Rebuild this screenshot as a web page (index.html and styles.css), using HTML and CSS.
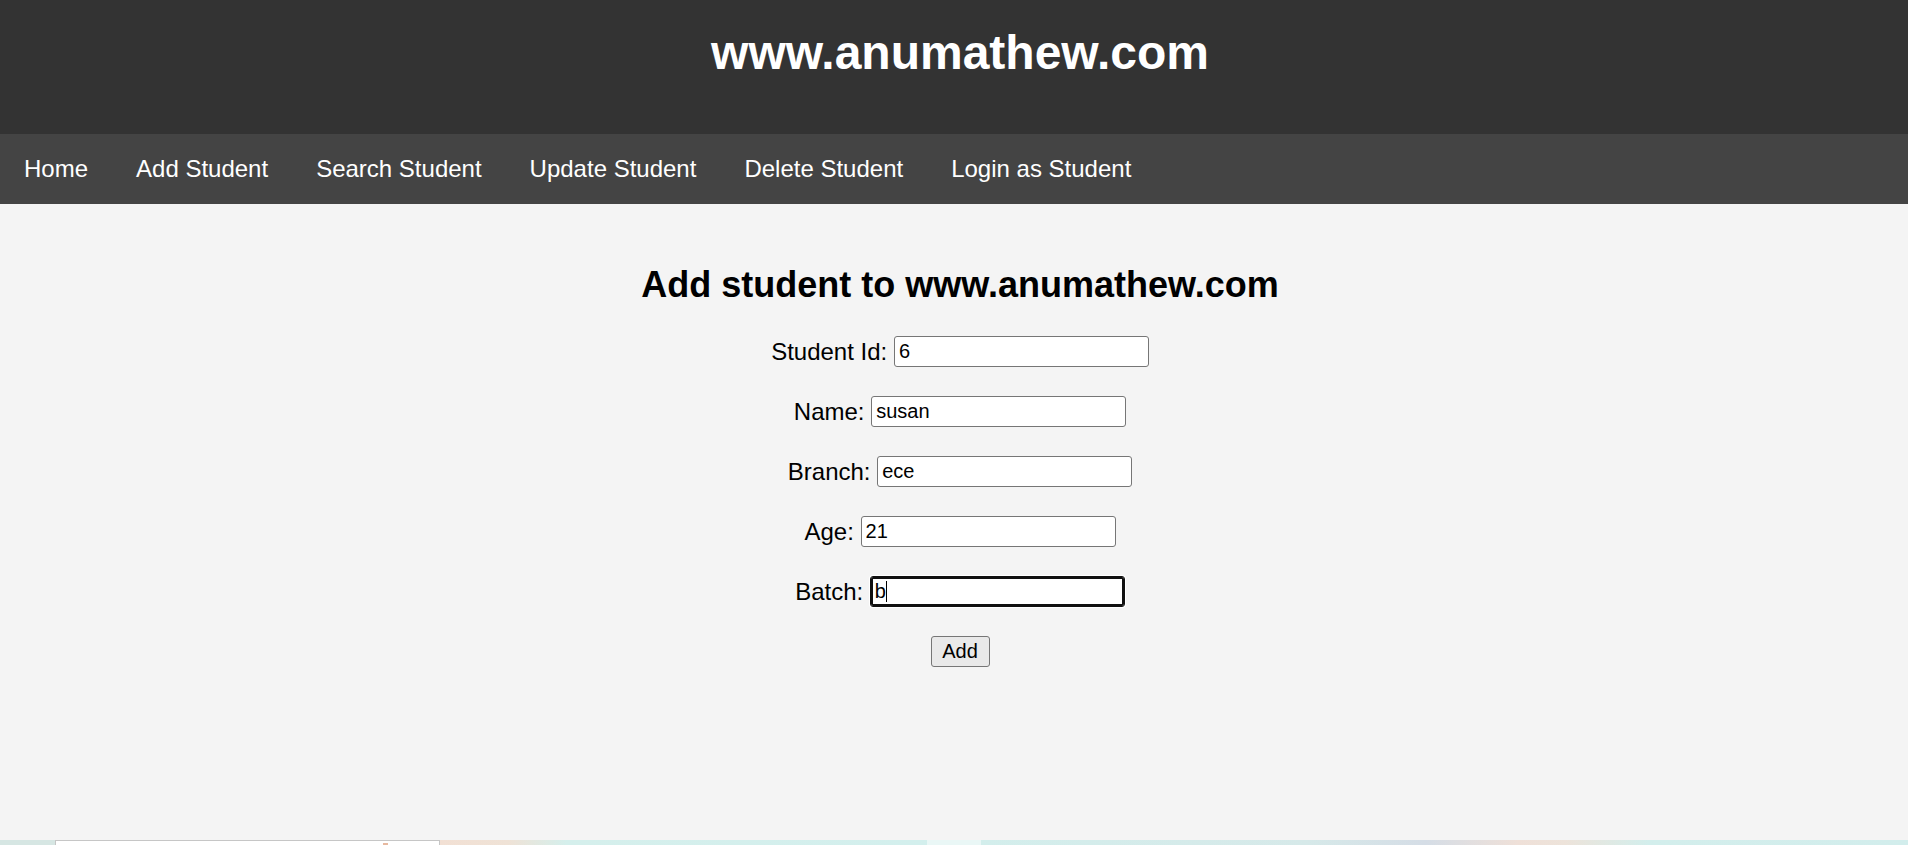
FILE: index.html
```html
<!DOCTYPE html>
<html lang="en">
<head>
<meta charset="utf-8">
<title>Add Student - www.anumathew.com</title>
<link rel="stylesheet" href="styles.css">
</head>
<body>
<header class="site-header">
  <h1 class="site-title">www.anumathew.com</h1>
</header>
<nav class="top-nav">
  <a class="nav-link" href="#">Home</a>
  <a class="nav-link" href="#">Add Student</a>
  <a class="nav-link" href="#">Search Student</a>
  <a class="nav-link" href="#">Update Student</a>
  <a class="nav-link" href="#">Delete Student</a>
  <a class="nav-link" href="#">Login as Student</a>
</nav>
<main class="content">
  <h2 class="page-heading">Add student to www.anumathew.com</h2>
  <form class="student-form">
    <div class="form-row">
      <label class="field-label" for="sid">Student Id:</label>
      <input class="field-input" id="sid" type="text" value="6">
    </div>
    <div class="form-row">
      <label class="field-label" for="sname">Name:</label>
      <input class="field-input" id="sname" type="text" value="susan">
    </div>
    <div class="form-row">
      <label class="field-label" for="sbranch">Branch:</label>
      <input class="field-input" id="sbranch" type="text" value="ece">
    </div>
    <div class="form-row">
      <label class="field-label" for="sage">Age:</label>
      <input class="field-input" id="sage" type="text" value="21">
    </div>
    <div class="form-row">
      <label class="field-label" for="sbatch">Batch:</label>
      <span class="input-wrap">
        <input class="field-input is-focused" id="sbatch" type="text" value="b">
        <span class="caret"></span>
      </span>
    </div>
    <div class="form-row">
      <button class="submit-btn" type="button">Add</button>
    </div>
  </form>
</main>
<div class="taskbar-strip">
  <span class="strip-seg seg-a"></span>
  <span class="strip-seg seg-b"><span class="speck"></span></span>
  <span class="strip-seg seg-c"></span>
  <span class="strip-seg seg-d"></span>
  <span class="strip-seg seg-e"></span>
</div>
</body>
</html>
```
FILE: styles.css
```css
html, body {
  margin: 0;
  padding: 0;
}

body {
  height: 100vh;
  display: flex;
  flex-direction: column;
  font-family: "Liberation Sans", Arial, sans-serif;
  background: #f4f4f4;
  overflow: hidden;
}

.site-header {
  background: #333333;
  height: 134px;
  box-sizing: border-box;
  padding: 25px 0 0 12px;
  flex: none;
}

.site-title {
  margin: 0;
  color: #ffffff;
  font-size: 48px;
  font-weight: bold;
  line-height: normal;
  text-align: center;
}

.top-nav {
  background: #444444;
  display: flex;
  flex: none;
}

.nav-link {
  color: #ffffff;
  text-decoration: none;
  font-size: 24px;
  line-height: 28px;
  padding: 21px 24px;
}

.content {
  flex: 1;
  padding: 30px 0 0 12px;
  background: #f4f4f4;
}

.page-heading {
  margin: 30px 0;
  font-size: 36px;
  font-weight: bold;
  line-height: normal;
  text-align: center;
  color: #000000;
}

.student-form {
  display: flex;
  flex-direction: column;
  gap: 29px;
}

.form-row {
  display: flex;
  justify-content: center;
  align-items: center;
  gap: 6.67px;
  height: 31px;
}

.field-label {
  font-size: 24px;
  line-height: normal;
  color: #000000;
}

.input-wrap {
  position: relative;
  display: inline-flex;
}

.field-input {
  width: 255px;
  height: 31px;
  box-sizing: border-box;
  border: 1px solid #767676;
  border-radius: 3px;
  padding: 0 4px;
  margin: 0;
  background: #ffffff;
  color: #000000;
  font-family: "Liberation Sans", Arial, sans-serif;
  font-size: 20px;
  outline: none;
}

.field-input.is-focused {
  border-color: #101010;
  box-shadow: inset 0 0 0 2px #101010, 0 0 0 1px #ffffff;
}

.caret {
  position: absolute;
  left: 16px;
  top: 5px;
  width: 1px;
  height: 21px;
  background: #000000;
}

.submit-btn {
  width: 59px;
  height: 31px;
  box-sizing: border-box;
  padding: 0;
  margin: 0;
  border: 1px solid #767676;
  border-radius: 3px;
  background: #e9e9e9;
  color: #000000;
  font-family: "Liberation Sans", Arial, sans-serif;
  font-size: 20px;
}

.taskbar-strip {
  flex: none;
  height: 5px;
  display: flex;
}

.strip-seg {
  display: block;
  height: 100%;
}

.seg-a {
  width: 55px;
  background: #d6e6e3;
}

.seg-b {
  width: 385px;
  box-sizing: border-box;
  background: #ffffff;
  border-top: 1px solid #c6c6c6;
  border-left: 1px solid #c6c6c6;
  border-right: 1px solid #c6c6c6;
  position: relative;
}

.speck {
  position: absolute;
  left: 327px;
  top: 2px;
  width: 5px;
  height: 3px;
  background: #e7b9a0;
}

.seg-c {
  width: 487px;
  background: linear-gradient(90deg, #f2e0d4 0%, #efe2d6 14%, #d5efec 26%, #d3efed 100%);
}

.seg-d {
  width: 54px;
  background: #eaf7f6;
}

.seg-e {
  flex: 1;
  background: linear-gradient(90deg, #d3eeec 0%, #d6e9e9 35%, #d5dde6 48%, #efe0d8 58%, #ede3da 63%, #d3eeec 72%, #d2edec 100%);
}
```
